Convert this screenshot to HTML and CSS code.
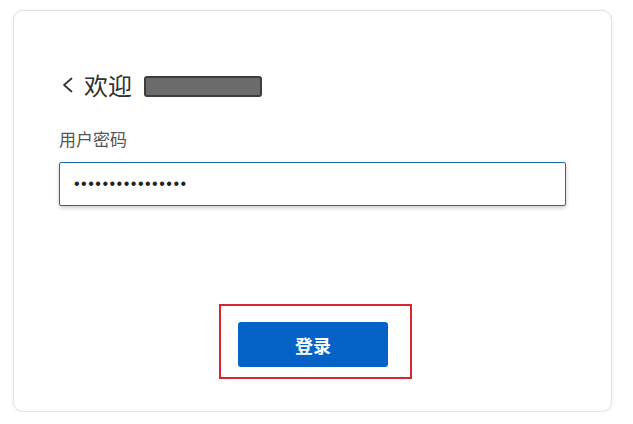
FILE: index.html
```html
<!DOCTYPE html>
<html lang="zh-CN">
<head>
<meta charset="utf-8">
<title>登录</title>
<link rel="stylesheet" href="styles.css">
</head>
<body>
<div class="card">
  <div class="title-row">
    <svg class="back" width="14" height="18" viewBox="0 0 14 18" aria-hidden="true">
      <polyline points="11.5,2.5 4,9 11.5,15.5" fill="none" stroke="#333" stroke-width="1.7" stroke-linecap="round" stroke-linejoin="round"/>
    </svg>
    <h1 class="title">欢迎</h1>
    <span class="redact"></span>
  </div>
  <div class="label">用户密码</div>
  <div class="input"><span class="dots">••••••••••••••••</span></div>
  <div class="highlight">
    <button class="btn">登录</button>
  </div>
</div>
</body>
</html>
```

FILE: styles.css
```css
html, body {
  margin: 0;
  padding: 0;
  background: #ffffff;
}
body {
  font-family: "Noto Sans CJK SC", "Noto Sans", sans-serif;
  color: #333;
}
.card {
  box-sizing: border-box;
  margin: 10px 0 0 13px;
  width: 599px;
  height: 402px;
  border: 1px solid #e2e2e2;
  border-radius: 10px;
  box-shadow: 0 1px 5px rgba(0, 0, 0, 0.07);
  padding: 58px 45px 0 45px;
  background: #fff;
}
.title-row {
  display: flex;
  align-items: center;
  height: 32px;
}
.back {
  margin-left: 1px;
  flex: none;
}
.title {
  margin: 0 0 0 10px;
  font-size: 24px;
  font-weight: 400;
  line-height: 32px;
  color: #2f2f2f;
}
.redact {
  margin-left: 12px;
  margin-top: 2px;
  width: 118px;
  height: 21px;
  box-sizing: border-box;
  background: #6b6b6b;
  border: 2px solid #3d3d3d;
  border-radius: 3px;
}
.label {
  margin-top: 26px;
  font-size: 17px;
  line-height: 24px;
  color: #555;
}
.input {
  box-sizing: border-box;
  margin-top: 11px;
  height: 44px;
  border: 1px solid #1b67b0;
  border-radius: 2px;
  box-shadow: 0 2px 4px rgba(0, 0, 0, 0.2);
  display: flex;
  align-items: center;
  padding-left: 14px;
  background: #fff;
}
.dots {
  font-family: "Liberation Sans", Arial, sans-serif;
  font-size: 16px;
  letter-spacing: 1.5px;
  color: #222;
  line-height: 1;
}
.highlight {
  margin-top: 98px;
  margin-left: 160px;
  width: fit-content;
  border: 2px solid #d9252d;
  padding: 16px 22px 10px 17px;
}
.btn {
  display: block;
  width: 150px;
  height: 45px;
  border: none;
  border-radius: 3px;
  background: #0563c7;
  color: #fff;
  font-family: "Noto Sans CJK SC", sans-serif;
  font-size: 18px;
  font-weight: 700;
  padding: 0;
}
```
